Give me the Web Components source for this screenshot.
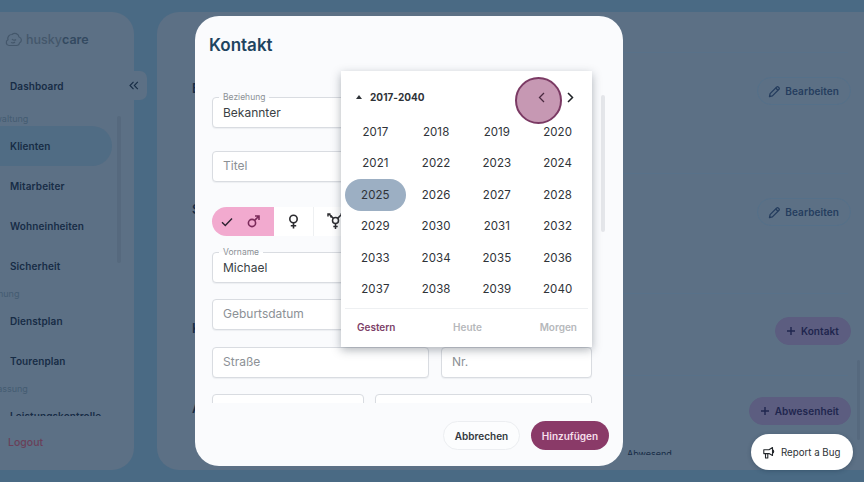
<!DOCTYPE html>
<html lang="de">
<head>
<meta charset="utf-8">
<title>huskycare</title>
<style>
  html, body { margin: 0; height: 100%; }
  body { width: 864px; height: 482px; overflow: hidden; background: #4a6a84; font-family: Inter, "Liberation Sans", sans-serif; }
</style>
</head>
<body>
<hc-app>
  <hc-sidebar slot="sidebar">
    <hc-nav-item slot="top">Dashboard</hc-nav-item>
    <hc-nav-section style="--shift:-20px">Verwaltung</hc-nav-section>
    <hc-nav-item active>Klienten</hc-nav-item>
    <hc-nav-item>Mitarbeiter</hc-nav-item>
    <hc-nav-item>Wohneinheiten</hc-nav-item>
    <hc-nav-item>Sicherheit</hc-nav-item>
    <hc-nav-section style="--shift:-15px">Planung</hc-nav-section>
    <hc-nav-item>Dienstplan</hc-nav-item>
    <hc-nav-item>Tourenplan</hc-nav-item>
    <hc-nav-section style="--shift:-15px">Erfassung</hc-nav-section>
    <hc-nav-item>Leistungskontrolle</hc-nav-item>
  </hc-sidebar>
  <hc-detail-panel slot="main">
    <hc-detail-row heading="Beziehung" height="121" top="24"><hc-pill icon="edit">Bearbeiten</hc-pill></hc-detail-row>
    <hc-detail-row heading="Stammdaten" height="120" top="24"><hc-pill icon="edit">Bearbeiten</hc-pill></hc-detail-row>
    <hc-detail-row heading="Kontakte" height="82" top="23"><hc-pill icon="plus" variant="tint">Kontakt</hc-pill></hc-detail-row>
    <hc-detail-row heading="Abwesenheiten" height="69" top="21"><hc-pill icon="plus" variant="tint">Abwesenheit</hc-pill></hc-detail-row>
  </hc-detail-panel>
</hc-app>

<hc-modal heading="Kontakt">
  <hc-field label="Beziehung" value="Bekannter"></hc-field>
  <hc-field placeholder="Titel" style="margin-top:23px"></hc-field>
  <hc-gender-toggle style="margin-top:25px"></hc-gender-toggle>
  <hc-field label="Vorname" value="Michael" style="margin-top:16px"></hc-field>
  <hc-field placeholder="Geburtsdatum" style="margin-top:16px"></hc-field>
  <div style="display:flex;gap:12px;margin-top:17px">
    <hc-field placeholder="Straße" style="flex:0 0 217px"></hc-field>
    <hc-field placeholder="Nr." style="flex:1"></hc-field>
  </div>
  <div style="display:flex;gap:11px;margin-top:16px">
    <hc-field placeholder="PLZ" style="flex:0 0 152px"></hc-field>
    <hc-field placeholder="Ort" style="flex:1"></hc-field>
  </div>
  <hc-year-picker slot="overlay"></hc-year-picker>
</hc-modal>

<hc-report-bug>Report a Bug</hc-report-bug>

<script>
const ICONS = {
  edit: '<svg width="13" height="13" viewBox="0 0 13 13" fill="none" stroke="currentColor" stroke-width="1.3" stroke-linejoin="round"><path d="M1.5 11.5l.6-2.9 6.6-6.6a1.1 1.1 0 0 1 1.6 0l.7.7a1.1 1.1 0 0 1 0 1.6l-6.6 6.6z"/><path d="M7.7 3l2.3 2.3"/></svg>',
  plus: '<svg width="10" height="10" viewBox="0 0 10 10" fill="none" stroke="currentColor" stroke-width="1.4"><path d="M5 1v8M1 5h8"/></svg>'
};

class HcApp extends HTMLElement {
  constructor() {
    super();
    this.attachShadow({ mode: 'open' }).innerHTML = `
      <style>
        :host { display: grid; grid-template-columns: 134px 1fr; column-gap: 23px; height: 458px; padding: 12px 0; }
      </style>
      <slot name="sidebar"></slot>
      <slot name="main"></slot>`;
  }
}

class HcSidebar extends HTMLElement {
  constructor() {
    super();
    this.attachShadow({ mode: 'open' }).innerHTML = `
      <style>
        :host { display: flex; flex-direction: column; position: relative; height: 458px; background: #5c7085; border-radius: 0 22px 22px 0; }
        .logo { display: flex; align-items: center; gap: 3px; height: 54px; padding-left: 5px; font-size: 12.5px; font-weight: 500; color: #44576b; }
        .logo b { font-weight: 600; color: #334960; }
        .nav { height: 310px; padding-top: 5px; box-sizing: border-box; overflow: hidden; }
        .logout { margin: 20px 0 0 8px; font-size: 10.5px; font-weight: 500; color: #6a4059; }
        .thumb { position: absolute; left: 117px; top: 104px; width: 4px; height: 147px; background: #56697e; border-radius: 2px; }
        .collapse { position: absolute; left: 127px; top: 59px; width: 20px; height: 29px; box-sizing: border-box; padding-right: 6px; display: flex; align-items: center; justify-content: center; background: #5c7085; border-radius: 0 7px 7px 0; color: #172c45; }
      </style>
      <div class="logo">
        <svg width="18" height="15" viewBox="0 0 18 15" fill="none" stroke="#44576b" stroke-width="1.2" stroke-linejoin="round"><path d="M4 13.5a3 3 0 0 1-1-5.7 4 4 0 0 1 4-5.3 4.2 4.2 0 0 1 7 2.500 3.2 3.2 0 0 1 .5 6 3 3 0 0 1-3 2.500z"/><path d="M7 7c1 1.500 3 1.500 4 .5M6 10.500c1.500.5 3 .5 4-.5"/></svg>
        <span>husky<b>care</b></span>
      </div>
      <slot name="top"></slot>
      <div class="nav"><slot></slot></div>
      <div class="logout">Logout</div>
      <div class="thumb"></div>
      <div class="collapse">
        <svg width="10" height="9" viewBox="0 0 10 9" fill="none" stroke="currentColor" stroke-width="1.1"><path d="M4.500.8L1 4.500l3.500 3.700M8.800.8L5.300 4.500l3.500 3.700"/></svg>
      </div>`;
  }
}

class HcNavItem extends HTMLElement {
  constructor() {
    super();
    this.attachShadow({ mode: 'open' }).innerHTML = `
      <style>
        :host { display: flex; align-items: center; height: 40px; width: 112px; padding-left: 10px; box-sizing: border-box; font-size: 10px; letter-spacing: .1px; font-weight: 600; color: #172c45; border-radius: 0 20px 20px 0; }
        :host([active]) { background: #506c84; }
      </style>
      <slot></slot>`;
  }
}

class HcNavSection extends HTMLElement {
  constructor() {
    super();
    this.attachShadow({ mode: 'open' }).innerHTML = `
      <style>
        :host { display: block; height: 15px; line-height: 15px; margin-left: var(--shift, 0); font-size: 9px; color: #445c72; white-space: nowrap; }
      </style>
      <slot></slot>`;
  }
}

class HcDetailPanel extends HTMLElement {
  constructor() {
    super();
    this.attachShadow({ mode: 'open' }).innerHTML = `
      <style>
        :host { display: block; position: relative; height: 458px; overflow: hidden; background: #5c7085; border-radius: 22px 0 0 22px; padding: 40px 0 0 35px; box-sizing: border-box; }
        .rest { height: 6px; overflow: hidden; margin-left: 435px; padding-top: 5px; font-size: 9px; line-height: 10px; color: #172c45; }
        .thumb { position: absolute; right: 4px; top: 348px; width: 3px; height: 80px; background: #56697e; border-radius: 2px; }
      </style>
      <slot></slot>
      <div class="rest">Abwesend</div>
      <div class="thumb"></div>`;
  }
}

class HcDetailRow extends HTMLElement {
  constructor() {
    super();
    const height = this.getAttribute('height');
    const top = this.getAttribute('top');
    this.attachShadow({ mode: 'open' }).innerHTML = `
      <style>
        :host { display: flex; justify-content: space-between; align-items: flex-start; box-sizing: border-box; height: ${height}px; padding-top: ${top}px; margin-right: 16px; border-top: 1px solid #587189; }
        h3 { margin: 0; font-size: 13px; font-weight: 600; color: #172c45; line-height: 22px; }
        ::slotted(*) { margin-right: -3px; }
      </style>
      <h3>${this.getAttribute('heading')}</h3>
      <slot></slot>`;
  }
}

class HcPill extends HTMLElement {
  constructor() {
    super();
    this.attachShadow({ mode: 'open' }).innerHTML = `
      <style>
        :host { display: inline-flex; align-items: center; gap: 4px; height: 28px; padding: 0 11px 0 10px; box-sizing: border-box; border-radius: 14px; font-size: 10px; letter-spacing: .1px; font-weight: 600; color: #253d5e; border: 1px solid #557089; }
        :host([variant="tint"]) { background: #5c5d80; border-color: #5c5d80; color: #1f264e; gap: 5px; }
        span { display: flex; }
      </style>
      <span>${ICONS[this.getAttribute('icon')]}</span><slot></slot>`;
  }
}

class HcModal extends HTMLElement {
  constructor() {
    super();
    this.attachShadow({ mode: 'open' }).innerHTML = `
      <style>
        :host { position: absolute; left: 195px; top: 16px; width: 428px; height: 450px; display: flex; flex-direction: column; background: #fafbfd; border-radius: 24px; }
        h2 { margin: 0; padding: 19px 14px 0; height: 52px; box-sizing: border-box; font-size: 17px; line-height: 20px; font-weight: 600; color: #1e4460; }
        .form { height: 335px; box-sizing: border-box; padding: 29px 31px 0 17px; overflow: hidden; }
        footer { display: flex; justify-content: flex-end; gap: 11px; padding: 18px 14px 0 0; }
        button { height: 29px; border-radius: 15px; font: 600 10px Inter, "Liberation Sans", sans-serif; padding: 0; }
        .cancel { width: 77px; background: #fcfdfe; border: 1px solid #eceef1; color: #33383d; }
        .save { width: 78px; background: #8a3a68; border: 0; color: #f6dfeb; }
        .thumb { position: absolute; left: 406px; top: 79px; width: 4px; height: 137px; background: #e4e6ea; border-radius: 2px; }
      </style>
      <h2>${this.getAttribute('heading')}</h2>
      <div class="form"><slot></slot></div>
      <footer><button class="cancel">Abbrechen</button><button class="save">Hinzufügen</button></footer>
      <div class="thumb"></div>
      <slot name="overlay"></slot>`;
  }
}

class HcField extends HTMLElement {
  constructor() {
    super();
    const label = this.getAttribute('label');
    const value = this.getAttribute('value');
    const placeholder = this.getAttribute('placeholder');
    this.attachShadow({ mode: 'open' }).innerHTML = `
      <style>
        :host { display: block; position: relative; height: 31px; box-sizing: border-box; background: #fff; border: 1px solid #d9dce1; border-radius: 4px; box-shadow: 0 1px 1px rgba(30,50,70,.06); font-size: 12px; line-height: 28px; padding-left: 10px; color: #3a3f44; }
        :host([label]) { line-height: 30px; }
        .ph { color: #8c9196; }
        .label { position: absolute; left: 6px; top: -6px; padding: 0 4px; background: linear-gradient(#fafbfd 50%, #fff 50%); font-size: 8.500px; line-height: 11px; color: #8c9196; }
      </style>
      ${label ? `<span class="label">${label}</span>` : ''}
      ${value ? `<span>${value}</span>` : `<span class="ph">${placeholder || ''}</span>`}`;
  }
}

class HcGenderToggle extends HTMLElement {
  constructor() {
    super();
    this.attachShadow({ mode: 'open' }).innerHTML = `
      <style>
        :host { display: flex; height: 29px; }
        div { display: flex; align-items: center; justify-content: center; width: 40px; background: #fff; border-right: 1px solid #eef0f2; box-sizing: border-box; color: #2c2c30; }
        .on { width: 62px; border: 0; background: #f2aacf; border-radius: 15px 0 0 15px; color: #7b2a5a; gap: 14px; padding-right: 5px; }
        .trans { padding-left: 3px; }
      </style>
      <div class="on">
        <svg width="12" height="10" viewBox="0 0 12 10" fill="none" stroke="#2c2230" stroke-width="1.400"><path d="M1 5.300l3.300 3.200L11 1.500"/></svg>
        <svg width="13" height="13" viewBox="0 0 13 13" fill="none" stroke="currentColor" stroke-width="1.600"><circle cx="5" cy="8" r="3.600"/><path d="M7.600 5.400L12 1M8 1h4v4"/></svg>
      </div>
      <div>
        <svg width="11" height="15" viewBox="0 0 11 15" fill="none" stroke="currentColor" stroke-width="1.600"><circle cx="5.500" cy="5" r="3.700"/><path d="M5.500 8.700V14.500M2.800 11.800h5.400"/></svg>
      </div>
      <div class="trans">
        <svg width="17" height="17" viewBox="0 0 17 17" fill="none" stroke="currentColor" stroke-width="1.500"><circle cx="8.500" cy="7.500" r="3"/><path d="M8.500 10.500V16M6.300 13.500h4.400M6.400 5.400L2 1M1 3.500V1h2.500M3.300 4.300l1.700-1.700M10.600 5.400L15 1M13.500 1H16v2.500"/></svg>
      </div>
      <div></div>`;
  }
}

class HcYearPicker extends HTMLElement {
  constructor() {
    super();
    let cells = '';
    for (let year = 2017; year <= 2040; year++) {
      cells += `<span class="${year === 2025 ? 'sel' : ''}">${year}</span>`;
    }
    this.attachShadow({ mode: 'open' }).innerHTML = `
      <style>
        :host { position: absolute; left: 146px; top: 55px; width: 251px; height: 276px; background: #fff; box-shadow: 0 3px 9px rgba(30,40,55,.35); display: flex; flex-direction: column; color: #2f3338; }
        header { display: flex; align-items: center; height: 45px; padding: 7px 0 0 15px; box-sizing: border-box; font-size: 10px; font-weight: 700; letter-spacing: .05px; position: relative; }
        .caret { width: 0; height: 0; border: 3px solid transparent; border-bottom: 4px solid #2f3338; border-top: 0; margin-right: 8px; }
        .ripple { position: absolute; left: 174px; top: 6px; width: 47px; height: 47px; box-sizing: border-box; border-radius: 50%; background: #c698b3; border: 2px solid #7b3a64; }
        .prev, .next { position: absolute; top: 21px; display: flex; }
        .prev { left: 197px; color: #4a2a40; }
        .next { left: 226px; color: #1f2226; }
        .grid { display: grid; grid-template-columns: repeat(4, 60.750px); grid-auto-rows: 31.500px; padding-left: 4px; }
        .grid span { display: flex; align-items: center; justify-content: center; font-size: 11.500px; letter-spacing: .1px; border-radius: 16px; }
        .grid .sel { background: #9cafc3; }
        footer { display: flex; justify-content: space-between; align-items: center; height: 39px; margin: 3px 4px 0; padding: 0 11px 3px 12px; box-sizing: border-box; border-top: 1px solid #eef0f2; font-size: 10px; font-weight: 600; color: #b6b8bb; }
        .active { color: #7d3f68; }
      </style>
      <header>
        <span class="caret"></span>2017-2040
        <span class="ripple"></span>
        <span class="prev"><svg width="7" height="11" viewBox="0 0 7 11" fill="none" stroke="currentColor" stroke-width="1.300"><path d="M6 1L1.500 5.500 6 10"/></svg></span>
        <span class="next"><svg width="7" height="11" viewBox="0 0 7 11" fill="none" stroke="currentColor" stroke-width="1.500"><path d="M1 1l4.500 4.500L1 10"/></svg></span>
      </header>
      <div class="grid">${cells}</div>
      <footer><span class="active">Gestern</span><span>Heute</span><span>Morgen</span></footer>`;
  }
}

class HcReportBug extends HTMLElement {
  constructor() {
    super();
    this.attachShadow({ mode: 'open' }).innerHTML = `
      <style>
        :host { position: absolute; left: 751px; top: 434px; width: 102px; height: 36px; box-sizing: border-box; display: flex; align-items: center; gap: 5px; padding-left: 12px; background: #fff; border-radius: 18px; box-shadow: 0 1px 4px rgba(20,40,60,.3); font-size: 9.700px; color: #2c3135; white-space: nowrap; }
        svg { flex: none; }
      </style>
      <svg width="13" height="13" viewBox="0 0 13 13" fill="none" stroke="#22262a" stroke-width="1.100" stroke-linejoin="round"><path d="M.8 3.800h5.200L9.500 1.500v8L6 7.600H.8zM2.500 7.600V12h2.300V7.600M9.500 3.800a1.800 1.800 0 0 1 0 3.400"/></svg>
      <slot></slot>`;
  }
}

customElements.define('hc-app', HcApp);
customElements.define('hc-sidebar', HcSidebar);
customElements.define('hc-nav-item', HcNavItem);
customElements.define('hc-nav-section', HcNavSection);
customElements.define('hc-detail-panel', HcDetailPanel);
customElements.define('hc-detail-row', HcDetailRow);
customElements.define('hc-pill', HcPill);
customElements.define('hc-modal', HcModal);
customElements.define('hc-field', HcField);
customElements.define('hc-gender-toggle', HcGenderToggle);
customElements.define('hc-year-picker', HcYearPicker);
customElements.define('hc-report-bug', HcReportBug);
</script>
</body>
</html>
